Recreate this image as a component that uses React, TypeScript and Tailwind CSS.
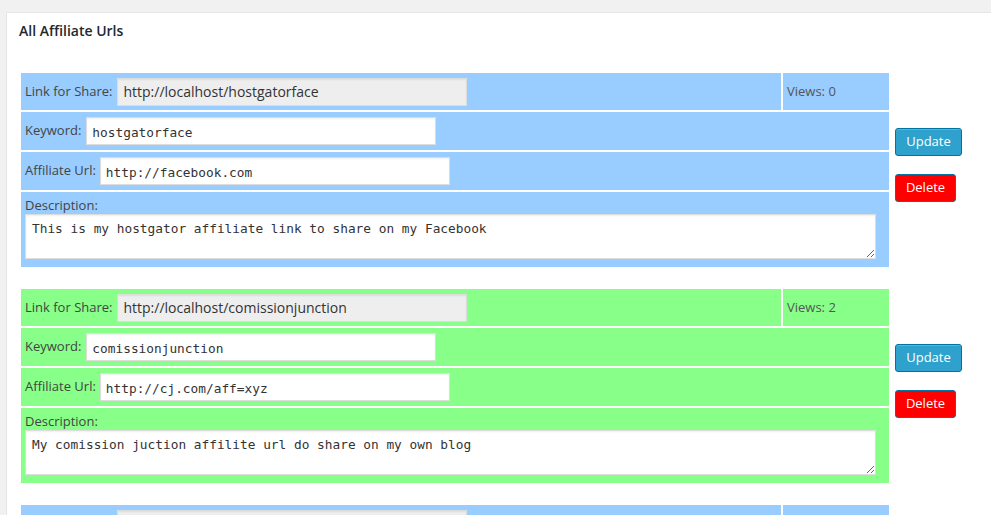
import React from 'react'

type Entry = {
  share: string
  views: number
  keyword: string
  url: string
  description: string
  bg: string
}

const ENTRIES: Entry[] = [
  {
    share: 'http://localhost/hostgatorface',
    views: 0,
    keyword: 'hostgatorface',
    url: 'http://facebook.com',
    description: 'This is my hostgator affiliate link to share on my Facebook',
    bg: 'bg-[#99ccff]',
  },
  {
    share: 'http://localhost/comissionjunction',
    views: 2,
    keyword: 'comissionjunction',
    url: 'http://cj.com/aff=xyz',
    description: 'My comission juction affilite url do share on my own blog',
    bg: 'bg-[#88ff88]',
  },
  {
    share: 'http://localhost/amazonbooks',
    views: 5,
    keyword: 'amazonbooks',
    url: 'http://amazon.com/?tag=aff-20',
    description: 'Amazon affiliate link for book reviews',
    bg: 'bg-[#99ccff]',
  },
]

const sans = "font-['Open_Sans',_'Liberation_Sans',_sans-serif]"
const mono = "font-['DejaVu_Sans_Mono',_'Liberation_Mono',_monospace]"

function EntryBlock({ e }: { e: Entry }) {
  return (
    <div className="flex items-center">
      {/* data table */}
      <div className="flex w-[868px] flex-col gap-[2px]">
        <div className="flex h-[37px] gap-[2px]">
          <div className={`${e.bg} flex flex-1 items-center gap-[5px] pl-[4px]`}>
            <span className="text-[13px] text-[#444]">Link for Share:</span>
            <input
              readOnly
              value={e.share}
              className={`${sans} h-[28px] w-[350px] border border-[#dddddd] bg-[#eeeeee] px-[5px] text-[14px] text-[#333] shadow-[inset_0_1px_2px_rgba(0,0,0,0.07)] outline-none`}
            />
          </div>
          <div className={`${e.bg} flex w-[106px] items-center pl-[4px] text-[13px] text-[#555]`}>
            Views: {e.views}
          </div>
        </div>
        <div className={`${e.bg} flex h-[38px] items-center gap-[5px] pl-[4px]`}>
          <span className="text-[13px] text-[#444]">Keyword:</span>
          <input
            readOnly
            value={e.keyword}
            className={`${mono} h-[28px] w-[350px] border border-[#dddddd] bg-white px-[5px] pt-[2px] text-[12.8px] text-[#333] shadow-[inset_0_1px_2px_rgba(0,0,0,0.07)] outline-none`}
          />
        </div>
        <div className={`${e.bg} flex h-[38px] items-center gap-[4px] pl-[4px]`}>
          <span className="text-[13px] text-[#444]">Affiliate Url:</span>
          <input
            readOnly
            value={e.url}
            className={`${mono} h-[28px] w-[350px] border border-[#dddddd] bg-white px-[5px] pt-[2px] text-[12.8px] text-[#333] shadow-[inset_0_1px_2px_rgba(0,0,0,0.07)] outline-none`}
          />
        </div>
        <div className={`${e.bg} flex h-[75px] flex-col pl-[4px] pt-[4px]`}>
          <span className="text-[13px] leading-[18px] text-[#444]">Description:</span>
          <textarea
            readOnly
            value={e.description}
            className={`${mono} h-[45px] w-[851px] border border-[#dddddd] bg-white px-[6px] pt-[5px] text-[12.8px] leading-[18px] text-[#333] shadow-[inset_0_1px_2px_rgba(0,0,0,0.07)] outline-none`}
          />
        </div>
      </div>

      {/* actions */}
      <div className="ml-[6px] flex flex-col items-start gap-[18px] pb-[10px]">
        <button className="h-[28px] w-[67px] rounded-[3px] border border-[#0074a2] bg-[#2ea2cc] text-[13px] text-white shadow-[inset_0_1px_0_rgba(120,200,230,0.5)]">
          Update
        </button>
        <button className="h-[28px] w-[61px] rounded-[3px] border border-[#0074a2] bg-[#ff0000] text-[13px] text-white">
          Delete
        </button>
      </div>
    </div>
  )
}

export default function App() {
  return (
    <div className={`${sans} h-[515px] w-[991px] overflow-hidden bg-[#f1f1f1] pl-[6px] pt-[12px]`}>
      <div className="w-[1010px] border border-[#e5e5e5] bg-white pb-[40px]">
        <h2 className="pl-[12px] pt-[8px] text-[14px] font-semibold leading-[20px] text-[#23282d]">
          All Affiliate Urls
        </h2>
        <div className="ml-[14px] mt-[32px] flex flex-col gap-[22px]">
          {ENTRIES.map(e => (
            <EntryBlock key={e.keyword} e={e} />
          ))}
        </div>
      </div>
    </div>
  )
}
